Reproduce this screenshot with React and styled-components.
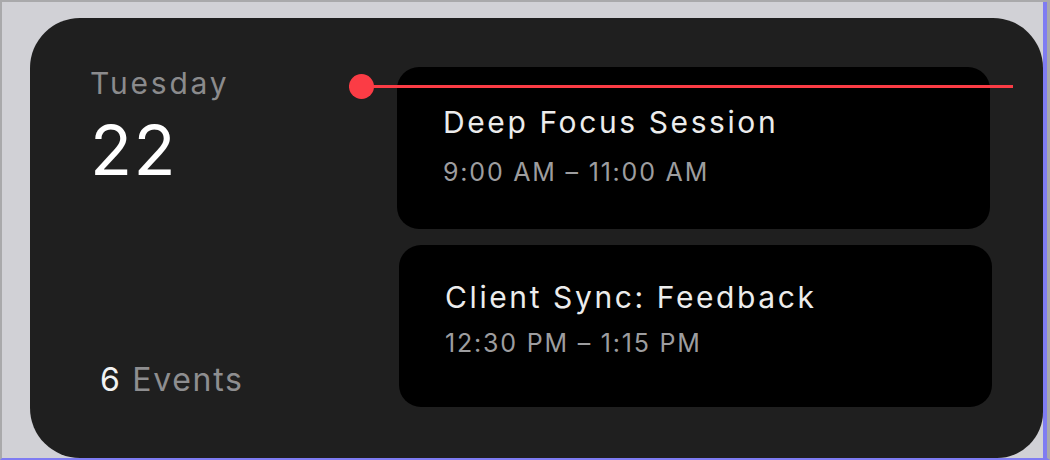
import styled, { createGlobalStyle } from 'styled-components'

const Global = createGlobalStyle`
    html, body {
        margin: 0;
        padding: 0;
        background: #d1d1d6;
    }
    * {
        box-sizing: border-box;
    }
`

const events = [
    { title: 'Deep Focus Session', time: '9:00 AM – 11:00 AM', shift: 0, top: 35, gap: 14 },
    { title: 'Client Sync: Feedback', time: '12:30 PM – 1:15 PM', shift: 2, top: 32, gap: 10 },
]

const App = () => {
    return (
        <>
            <Global />
            <Frame>
                <Stage>
                    <Widget>
                        <DayColumn>
                            <Weekday>Tuesday</Weekday>
                            <DayNumber>22</DayNumber>
                            <EventCount>
                                <strong>6</strong> Events
                            </EventCount>
                        </DayColumn>
                        <Agenda>
                            <NowLine>
                                <NowDot />
                            </NowLine>
                            {events.map((ev) => (
                                <EventCard key={ev.title} shift={ev.shift} top={ev.top}>
                                    <EventTitle>{ev.title}</EventTitle>
                                    <EventTime gap={ev.gap}>{ev.time}</EventTime>
                                </EventCard>
                            ))}
                        </Agenda>
                    </Widget>
                </Stage>
            </Frame>
        </>
    )
}

const Frame = styled.div`
    width: 1050px;
    height: 460px;
    border-top: 2px solid #a9a9ab;
    border-left: 2px solid #a9a9ab;
    border-right: 3px solid #a9a9ab;
    border-bottom: 2px solid #7f7cf2;
    overflow: hidden;
`
const Stage = styled.div`
    height: 100%;
    padding: 16px 0 0 28px;
    border-right: 4px solid #7f7cf2;
    overflow: hidden;
`
const Widget = styled.div`
    width: 1013px;
    height: 440px;
    background: #1f1f1f;
    border-radius: 50px 50px 46px 50px;
    display: grid;
    grid-template-columns: 307px 1fr;
    padding: 48px 53px 0 60px;
    font-family: Inter, 'Noto Sans', sans-serif;
`
const DayColumn = styled.div`
    display: flex;
    flex-direction: column;
    padding-bottom: 58px;
`
const Weekday = styled.div`
    font-size: 30px;
    line-height: 34px;
    color: #8b8b8d;
    letter-spacing: 2.8px;
`
const DayNumber = styled.div`
    margin-top: 12px;
    font-size: 69px;
    line-height: 76px;
    font-weight: 400;
    letter-spacing: 1.5px;
    color: #ffffff;
`
const EventCount = styled.div`
    margin-top: auto;
    margin-left: 10px;
    font-size: 32px;
    line-height: 40px;
    letter-spacing: 1.7px;
    color: #8e8e90;
    strong {
        font-weight: 400;
        color: #f2f2f2;
    }
`
const Agenda = styled.div`
    position: relative;
    display: flex;
    flex-direction: column;
    gap: 16px;
    margin-top: 1px;
`
const NowLine = styled.div`
    position: absolute;
    left: -48px;
    right: -23px;
    top: 18px;
    height: 3px;
    background: #fb3c45;
    z-index: 2;
`
const NowDot = styled.div`
    position: absolute;
    left: 0;
    top: 50%;
    width: 25px;
    height: 25px;
    margin-top: -12.5px;
    border-radius: 50%;
    background: #fb3c45;
`
const EventCard = styled.div`
    height: 162px;
    margin-left: ${(p) => p.shift}px;
    margin-right: ${(p) => -p.shift}px;
    background: #000;
    border-radius: 22px;
    padding: ${(p) => p.top}px 46px 0;
`
const EventTitle = styled.div`
    font-size: 30px;
    line-height: 40px;
    letter-spacing: 2.6px;
    color: #ececec;
`
const EventTime = styled.div`
    margin-top: ${(p) => p.gap}px;
    font-size: 25px;
    line-height: 32px;
    letter-spacing: 1.8px;
    color: #9d9d9f;
`

export default App
